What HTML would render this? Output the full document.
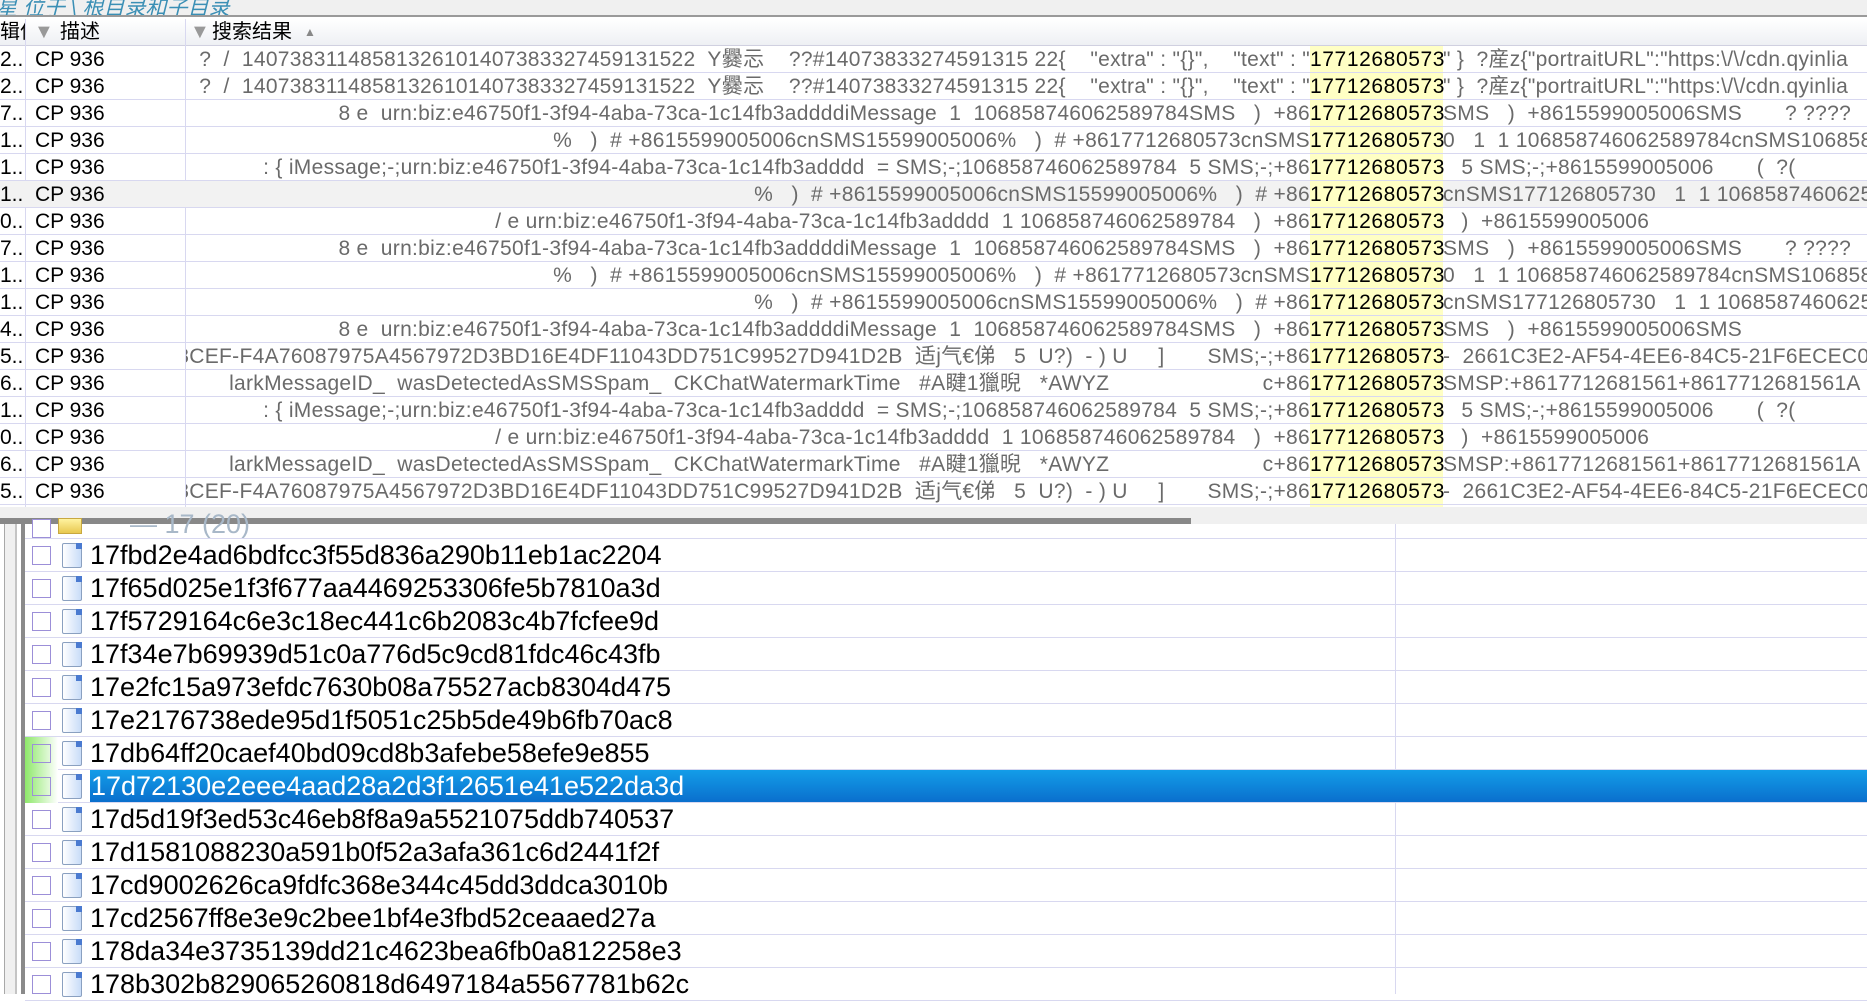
<!DOCTYPE html>
<html><head><meta charset="utf-8"><style>
*{margin:0;padding:0;box-sizing:border-box}
body{width:1867px;height:994px;overflow:hidden;background:#fff;position:relative;font-family:"Liberation Sans","Noto Sans CJK SC",sans-serif}
.abs{position:absolute;white-space:nowrap}
.top{left:0;top:0;width:1867px;height:17px;background:#f0f0f0;border-bottom:2px solid #9a9a9a;overflow:hidden}
.top span{position:absolute;left:-4px;top:-8px;font-size:21px;color:#3a8fb5;font-style:italic;white-space:nowrap}
.hdr{left:0;top:19px;width:1867px;height:27px;background:linear-gradient(#fff,#eef0f4);border-bottom:1px solid #d0d0e0;font-size:20px;line-height:27px}
.row{position:absolute;left:0;width:1867px;height:27px;border-bottom:1px solid #d8d8f0;font-size:21px;line-height:27px;white-space:pre;overflow:hidden}
.c0{position:absolute;left:0;width:25px;overflow:hidden;text-align:left}
.c1{position:absolute;left:35px;color:#000}
.clip{position:absolute;left:186px;top:0;width:1681px;height:26px;overflow:hidden;letter-spacing:0.3px}
.pre{position:absolute;right:557px;color:#6a6a6a;text-align:right;white-space:pre}
.num{position:absolute;left:1124px;color:#000;width:133px;background:#ffffc4;height:26px;letter-spacing:0.6px}
.suf{position:absolute;left:1257px;color:#6a6a6a;white-space:pre}
.vl{position:absolute;top:19px;width:1px;height:488px;background:#d8d8f0}
.brow{position:absolute;left:25px;width:1842px;height:33px;border-bottom:1px solid #d8d8f0;font-size:27px;line-height:32px;white-space:nowrap}
.cb{position:absolute;left:7px;top:7px;width:19px;height:19px;border:1px solid #9c8fd8;background:#fff}
.fi{position:absolute;left:37px;top:4px;width:20px;height:25px;border:1px solid #8aa0c0;border-radius:2px;background:linear-gradient(90deg,#fff,#c8dcf8)}
.fi:after{content:"";position:absolute;right:-1px;top:-1px;width:6px;height:6px;background:#4a7ad0}
.tx{position:absolute;left:65px;top:0;color:#000}
.sel .tx{background:linear-gradient(#139de8,#0a6fcd);color:#fff;width:1777px;padding-left:1px}
.grn{position:absolute;left:0;top:0;width:33px;height:33px;background:linear-gradient(90deg,#8ee86a,#fff)}
</style></head><body>
<div class="abs top"><span>星 位于 \ 根目录和子目录</span></div>
<div class="abs hdr">
<span class="abs" style="left:0;width:25px;overflow:hidden">辑偏</span>
<span class="abs" style="left:34px;color:#999">▼</span><span class="abs" style="left:60px">描述</span>
<span class="abs" style="left:190px;color:#999">▼</span><span class="abs" style="left:212px">搜索结果</span><span class="abs" style="left:304px;font-size:12px;color:#888">▲</span>
</div>
<div class="vl" style="left:25px"></div><div class="vl" style="left:185px"></div>

<div class="row" style="top:46px"><span class="c0">2...</span><span class="c1">CP 936</span><div class="clip"><span class="pre">?  /  14073831148581326101407383327459131522  Y爨忈    ??#14073833274591315 22{    "extra" : "{}",    "text" : "</span><span class="num">17712680573</span><span class="suf">" }  ?産z{"portraitURL":"https:\/\/cdn.qyinlia</span></div></div>
<div class="row" style="top:73px"><span class="c0">2...</span><span class="c1">CP 936</span><div class="clip"><span class="pre">?  /  14073831148581326101407383327459131522  Y爨忈    ??#14073833274591315 22{    "extra" : "{}",    "text" : "</span><span class="num">17712680573</span><span class="suf">" }  ?産z{"portraitURL":"https:\/\/cdn.qyinlia</span></div></div>
<div class="row" style="top:100px"><span class="c0">7...</span><span class="c1">CP 936</span><div class="clip"><span class="pre">8 e  urn:biz:e46750f1-3f94-4aba-73ca-1c14fb3addddiMessage  1  106858746062589784SMS   )  +86</span><span class="num">17712680573</span><span class="suf">SMS   )  +8615599005006SMS       ? ????</span></div></div>
<div class="row" style="top:127px"><span class="c0">1...</span><span class="c1">CP 936</span><div class="clip"><span class="pre">%   )  # +8615599005006cnSMS15599005006%   )  # +8617712680573cnSMS</span><span class="num">17712680573</span><span class="suf">0   1  1 106858746062589784cnSMS106858</span></div></div>
<div class="row" style="top:154px"><span class="c0">1...</span><span class="c1">CP 936</span><div class="clip"><span class="pre">: { iMessage;-;urn:biz:e46750f1-3f94-4aba-73ca-1c14fb3adddd  = SMS;-;106858746062589784  5 SMS;-;+86</span><span class="num">17712680573</span><span class="suf">   5 SMS;-;+8615599005006       (  ?(</span></div></div>
<div class="row" style="top:181px;background:#f2f2f2"><span class="c0">1...</span><span class="c1">CP 936</span><div class="clip"><span class="pre">%   )  # +8615599005006cnSMS15599005006%   )  # +86</span><span class="num">17712680573</span><span class="suf">cnSMS177126805730   1  1 1068587460625</span></div></div>
<div class="row" style="top:208px"><span class="c0">0...</span><span class="c1">CP 936</span><div class="clip"><span class="pre">/ e urn:biz:e46750f1-3f94-4aba-73ca-1c14fb3adddd  1 106858746062589784   )  +86</span><span class="num">17712680573</span><span class="suf">   )  +8615599005006</span></div></div>
<div class="row" style="top:235px"><span class="c0">7...</span><span class="c1">CP 936</span><div class="clip"><span class="pre">8 e  urn:biz:e46750f1-3f94-4aba-73ca-1c14fb3addddiMessage  1  106858746062589784SMS   )  +86</span><span class="num">17712680573</span><span class="suf">SMS   )  +8615599005006SMS       ? ????</span></div></div>
<div class="row" style="top:262px"><span class="c0">1...</span><span class="c1">CP 936</span><div class="clip"><span class="pre">%   )  # +8615599005006cnSMS15599005006%   )  # +8617712680573cnSMS</span><span class="num">17712680573</span><span class="suf">0   1  1 106858746062589784cnSMS106858</span></div></div>
<div class="row" style="top:289px"><span class="c0">1...</span><span class="c1">CP 936</span><div class="clip"><span class="pre">%   )  # +8615599005006cnSMS15599005006%   )  # +86</span><span class="num">17712680573</span><span class="suf">cnSMS177126805730   1  1 1068587460625</span></div></div>
<div class="row" style="top:316px"><span class="c0">4...</span><span class="c1">CP 936</span><div class="clip"><span class="pre">8 e  urn:biz:e46750f1-3f94-4aba-73ca-1c14fb3addddiMessage  1  106858746062589784SMS   )  +86</span><span class="num">17712680573</span><span class="suf">SMS   )  +8615599005006SMS</span></div></div>
<div class="row" style="top:343px"><span class="c0">5...</span><span class="c1">CP 936</span><div class="clip"><span class="pre">8CEF-F4A76087975A4567972D3BD16E4DF11043DD751C99527D941D2B  适j气€俤   5  U?)  - ) U     ]       SMS;-;+86</span><span class="num">17712680573</span><span class="suf">-  2661C3E2-AF54-4EE6-84C5-21F6ECEC0F2</span></div></div>
<div class="row" style="top:370px"><span class="c0">6...</span><span class="c1">CP 936</span><div class="clip"><span class="pre">larkMessageID_  wasDetectedAsSMSSpam_  CKChatWatermarkTime   #A睷1獵晲   *AWYZ                         c+86</span><span class="num">17712680573</span><span class="suf">SMSP:+8617712681561+8617712681561A</span></div></div>
<div class="row" style="top:397px"><span class="c0">1...</span><span class="c1">CP 936</span><div class="clip"><span class="pre">: { iMessage;-;urn:biz:e46750f1-3f94-4aba-73ca-1c14fb3adddd  = SMS;-;106858746062589784  5 SMS;-;+86</span><span class="num">17712680573</span><span class="suf">   5 SMS;-;+8615599005006       (  ?(</span></div></div>
<div class="row" style="top:424px"><span class="c0">0...</span><span class="c1">CP 936</span><div class="clip"><span class="pre">/ e urn:biz:e46750f1-3f94-4aba-73ca-1c14fb3adddd  1 106858746062589784   )  +86</span><span class="num">17712680573</span><span class="suf">   )  +8615599005006</span></div></div>
<div class="row" style="top:451px"><span class="c0">6...</span><span class="c1">CP 936</span><div class="clip"><span class="pre">larkMessageID_  wasDetectedAsSMSSpam_  CKChatWatermarkTime   #A睷1獵晲   *AWYZ                         c+86</span><span class="num">17712680573</span><span class="suf">SMSP:+8617712681561+8617712681561A</span></div></div>
<div class="row" style="top:478px"><span class="c0">5...</span><span class="c1">CP 936</span><div class="clip"><span class="pre">8CEF-F4A76087975A4567972D3BD16E4DF11043DD751C99527D941D2B  适j气€俤   5  U?)  - ) U     ]       SMS;-;+86</span><span class="num">17712680573</span><span class="suf">-  2661C3E2-AF54-4EE6-84C5-21F6ECEC0F2</span></div></div>
<div class="abs" style="left:1310px;top:505px;width:133px;height:5px;background:#ffffc4"></div>

<div class="abs" style="left:0;top:507px;width:1867px;height:17px;background:#f0f0f0"></div>
<div class="abs" style="left:0;top:518px;width:1191px;height:6px;background:#888"></div>
<div class="abs" style="left:0;top:524px;width:15px;height:470px;background:#f0f0f0;border-left:4px solid #fff"></div>
<div class="abs" style="left:4px;top:524px;width:1px;height:470px;background:#a8a8a8"></div>
<div class="abs" style="left:15px;top:524px;width:2px;height:470px;background:#c4c4c4"></div>
<div class="abs" style="left:21px;top:524px;width:4px;height:470px;background:#8a8a8a"></div>
<div class="abs" style="left:1395px;top:524px;width:1px;height:470px;background:#d8d8f0"></div>
<div class="brow" style="top:506px;height:33px;overflow:hidden"><span class="cb" style="top:13px"></span><span class="abs" style="left:33px;top:12px;width:24px;height:16px;background:linear-gradient(#fff3a0,#e8c850);border:1px solid #c8a840"></span><span class="abs" style="left:105px;top:2px;color:#a8b8c8">—   17 (20)</span></div>

<div class="brow" style="top:539px"><span class="cb"></span><span class="fi"></span><span class="tx">17fbd2e4ad6bdfcc3f55d836a290b11eb1ac2204</span></div>
<div class="brow" style="top:572px"><span class="cb"></span><span class="fi"></span><span class="tx">17f65d025e1f3f677aa4469253306fe5b7810a3d</span></div>
<div class="brow" style="top:605px"><span class="cb"></span><span class="fi"></span><span class="tx">17f5729164c6e3c18ec441c6b2083c4b7fcfee9d</span></div>
<div class="brow" style="top:638px"><span class="cb"></span><span class="fi"></span><span class="tx">17f34e7b69939d51c0a776d5c9cd81fdc46c43fb</span></div>
<div class="brow" style="top:671px"><span class="cb"></span><span class="fi"></span><span class="tx">17e2fc15a973efdc7630b08a75527acb8304d475</span></div>
<div class="brow" style="top:704px"><span class="cb"></span><span class="fi"></span><span class="tx">17e2176738ede95d1f5051c25b5de49b6fb70ac8</span></div>
<div class="brow" style="top:737px"><span class="grn"></span><span class="cb" style="background:transparent"></span><span class="fi"></span><span class="tx">17db64ff20caef40bd09cd8b3afebe58efe9e855</span></div>
<div class="brow sel" style="top:770px"><span class="grn"></span><span class="cb" style="background:transparent"></span><span class="fi"></span><span class="tx">17d72130e2eee4aad28a2d3f12651e41e522da3d</span></div>
<div class="brow" style="top:803px"><span class="cb"></span><span class="fi"></span><span class="tx">17d5d19f3ed53c46eb8f8a9a5521075ddb740537</span></div>
<div class="brow" style="top:836px"><span class="cb"></span><span class="fi"></span><span class="tx">17d1581088230a591b0f52a3afa361c6d2441f2f</span></div>
<div class="brow" style="top:869px"><span class="cb"></span><span class="fi"></span><span class="tx">17cd9002626ca9fdfc368e344c45dd3ddca3010b</span></div>
<div class="brow" style="top:902px"><span class="cb"></span><span class="fi"></span><span class="tx">17cd2567ff8e3e9c2bee1bf4e3fbd52ceaaed27a</span></div>
<div class="brow" style="top:935px"><span class="cb"></span><span class="fi"></span><span class="tx">178da34e3735139dd21c4623bea6fb0a812258e3</span></div>
<div class="brow" style="top:968px"><span class="cb"></span><span class="fi"></span><span class="tx">178b302b829065260818d6497184a5567781b62c</span></div>
</body></html>
